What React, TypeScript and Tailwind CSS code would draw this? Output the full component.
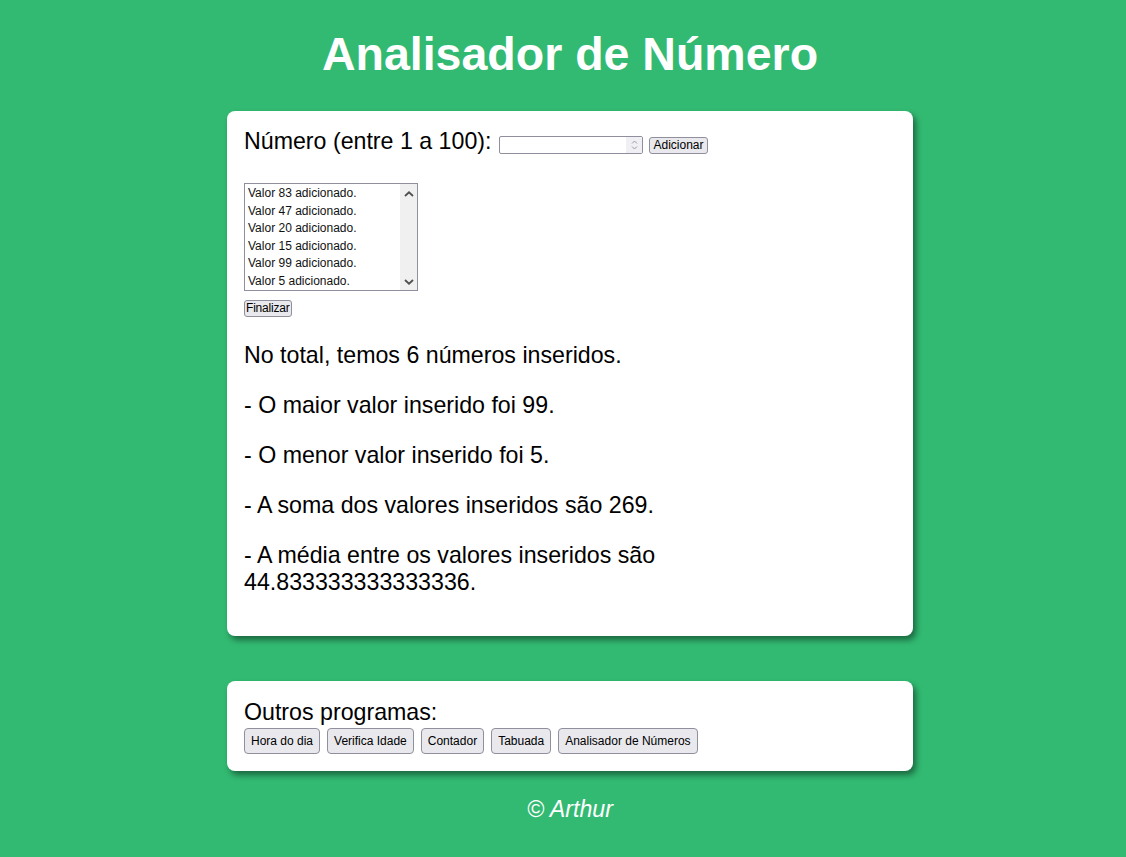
import React from 'react';

const valores = [83, 47, 20, 15, 99, 5];

const programas = ['Hora do dia', 'Verifica Idade', 'Contador', 'Tabuada', 'Analisador de Números'];

function ChevronUp() {
  return (
    <svg width="10" height="6" viewBox="0 0 10 6" className="block">
      <path d="M1 5 L5 1.3 L9 5" fill="none" stroke="#505050" strokeWidth="1.8" />
    </svg>
  );
}

function ChevronDown() {
  return (
    <svg width="10" height="6" viewBox="0 0 10 6" className="block">
      <path d="M1 1 L5 4.7 L9 1" fill="none" stroke="#505050" strokeWidth="1.8" />
    </svg>
  );
}

export default function App() {
  const soma = valores.reduce((a, b) => a + b, 0);
  const media = soma / valores.length;

  return (
    <div className="min-h-[857px] bg-[#32ba72] pl-[14px] font-['Liberation_Sans',Arial,sans-serif] text-[23.2px] text-black">
      <div className="flex flex-col items-center">
        <h1 className="pt-[28px] text-[46.5px] font-bold leading-[53px] text-white">Analisador de Número</h1>

        {/* Card principal */}
        <div className="mt-[30px] w-[686px] rounded-lg bg-white px-[17px] pt-[17px] pb-[17px] shadow-[3px_4px_6px_rgba(0,0,0,0.45)]">
          <div className="flex items-start leading-[27px]">
            <span>Número (entre 1 a 100):</span>
            <div className="ml-[8px] mt-[8px] flex h-[18px] w-[144px] items-center justify-end rounded-[2px] border border-[#8f8f9d] bg-white">
              <div className="flex h-full w-[16px] flex-col items-center justify-center bg-[#f0f0f4]">
                <svg width="7" height="12" viewBox="0 0 7 12">
                  <path d="M1 4.5 L3.5 2 L6 4.5 M1 7.5 L3.5 10 L6 7.5" fill="none" stroke="#9a9aa2" strokeWidth="1" />
                </svg>
              </div>
            </div>
            <button className="ml-[6px] mt-[9px] h-[17px] rounded-[3px] border border-[#8f8f9d] bg-[#e9e9ed] px-[3px] text-[12px] leading-[15px]">
              Adicionar
            </button>
          </div>

          {/* Lista de valores */}
          <div className="mt-[28px] flex h-[108px] w-[174px] border border-[#8f8f9d] bg-white">
            <div className="flex-1 pl-[3px] pt-[1px] text-[12px] leading-[17.6px] text-[#111]">
              {valores.map((v) => (
                <div key={v}>Valor {v} adicionado.</div>
              ))}
            </div>
            <div className="flex w-[17px] flex-col items-center justify-between bg-[#f0f0f0] pt-[7px] pb-[5px]">
              <ChevronUp />
              <ChevronDown />
            </div>
          </div>

          <button className="mt-[9px] block h-[17px] rounded-[3px] border border-[#8f8f9d] bg-[#e9e9ed] px-[1px] text-[12px] leading-[15px] tracking-[-0.2px]">
            Finalizar
          </button>

          <div className="mt-[25px] leading-[27px]">
            <p>No total, temos {valores.length} números inseridos.</p>
            <p className="mt-[23px]">- O maior valor inserido foi {Math.max(...valores)}.</p>
            <p className="mt-[23px]">- O menor valor inserido foi {Math.min(...valores)}.</p>
            <p className="mt-[23px]">- A soma dos valores inseridos são {soma}.</p>
            <p className="mt-[23px] w-[440px]">
              - A média entre os valores inseridos são {media}.
            </p>
          </div>
          <div className="h-[23px]" />
        </div>

        {/* Outros programas */}
        <div className="mt-[45px] w-[686px] rounded-lg bg-white px-[17px] pt-[18px] pb-[17px] shadow-[3px_4px_6px_rgba(0,0,0,0.45)]">
          <div className="leading-[27px]">Outros programas:</div>
          <div className="mt-[2px] flex gap-[7px]">
            {programas.map((p) => (
              <button
                key={p}
                className="h-[26px] rounded-[4px] border border-[#8f8f9d] bg-[#e9e9ed] px-[6px] text-[12px]"
              >
                {p}
              </button>
            ))}
          </div>
        </div>

        <footer className="mt-[25px] italic leading-[27px] text-white">© Arthur</footer>
      </div>
    </div>
  );
}
